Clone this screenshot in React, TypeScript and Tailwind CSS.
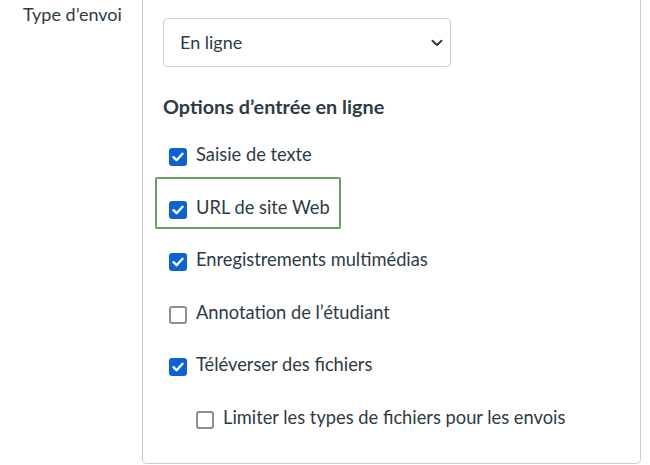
import React from "react";

function Box({ checked }: { checked: boolean }) {
  if (checked) {
    return (
      <span className="mt-[5px] flex h-[18px] w-[18px] shrink-0 items-center justify-center rounded-[3px] bg-[#0b62d6]">
        <svg width="12" height="10" viewBox="0 0 12 10" fill="none">
          <path d="M1.5 5.2 L4.6 8.2 L10.5 1.8" stroke="#ffffff" strokeWidth="2.4" strokeLinecap="round" strokeLinejoin="round" />
        </svg>
      </span>
    );
  }
  return <span className="mt-[5px] block h-[18px] w-[18px] shrink-0 rounded-[3px] border-2 border-[#8d8f91] bg-white" />;
}

function Row({ label, checked, indent, highlight }: { label: string; checked: boolean; indent?: boolean; highlight?: boolean }) {
  return (
    <div className={`relative flex h-[23px] items-start gap-[9px] ${indent ? "pl-[33px]" : "pl-[6px]"}`}>
      {highlight && (
        <span className="pointer-events-none absolute left-[-8px] top-[-19px] h-[52px] w-[186px] rounded-[2px] border-2 border-[#6a9e5c]" />
      )}
      <Box checked={checked} />
      <span className="pt-[1px] text-[18.3px] leading-[21.6px]">{label}</span>
    </div>
  );
}

export default function App() {
  return (
    <div className="flex min-h-[465px] bg-white text-[#2d3b45]" style={{ fontFamily: "Lato, 'Open Sans', sans-serif" }}>
      <div className="w-[142px] shrink-0 pl-[23px] pt-[4px] text-[18px] leading-[21.6px]">Type d’envoi</div>
      <div className="mb-[1px] h-[464px] w-[499px] shrink-0 rounded-b-[5px] border-x border-b border-[#c7cdd1] pl-[20px]">
        <div className="mt-[18px] flex h-[49px] w-[288px] items-center justify-between rounded-[4px] border border-[#c7cdd1] pl-[16px] pr-[7px]">
          <span className="text-[18px] leading-[21.6px]">En ligne</span>
          <svg width="12" height="8" viewBox="0 0 12 8" fill="none">
            <path d="M1.5 1.8 L6 6 L10.5 1.8" stroke="#2d3b45" strokeWidth="2" strokeLinecap="round" strokeLinejoin="round" />
          </svg>
        </div>
        <h2 className="mt-[27px] text-[19.8px] font-bold leading-[24px]">Options d’entrée en ligne</h2>
        <div className="mt-[25px] flex flex-col gap-[29.6px]">
          <Row label="Saisie de texte" checked />
          <Row label="URL de site Web" checked highlight />
          <Row label="Enregistrements multimédias" checked />
          <Row label="Annotation de l’étudiant" checked={false} />
          <Row label="Téléverser des fichiers" checked />
          <Row label="Limiter les types de fichiers pour les envois" checked={false} indent />
        </div>
      </div>
    </div>
  );
}
